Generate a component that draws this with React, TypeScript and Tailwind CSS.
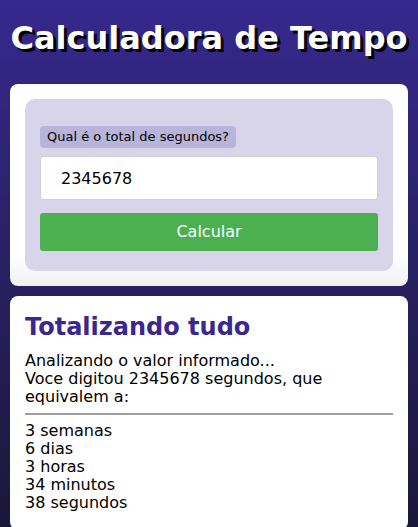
import React, { useState } from 'react';

const font = { fontFamily: '"DejaVu Sans", Verdana, sans-serif' };

const breakdown = (total: number) => {
  const semanas = Math.floor(total / 604800);
  let rest = total % 604800;
  const dias = Math.floor(rest / 86400);
  rest %= 86400;
  const horas = Math.floor(rest / 3600);
  rest %= 3600;
  const minutos = Math.floor(rest / 60);
  const segundos = rest % 60;
  return { semanas, dias, horas, minutos, segundos };
};

const App = () => {
  const [value, setValue] = useState('2345678');
  const [total, setTotal] = useState(2345678);
  const r = breakdown(total);

  return (
    <div
      className="min-h-[527px] w-full bg-gradient-to-b from-[#37288e] to-[#1b1738] px-[10px] pb-[2px]"
      style={font}
    >
      <h1 className="pt-[15px] pb-[23px] text-center text-[32px] font-bold leading-[46px] text-white [text-shadow:3px_3px_0_#000]">
        Calculadora de Tempo
      </h1>

      <div className="rounded-[8px] bg-gradient-to-b from-white from-85% to-[#f0f0f0] p-[15px]">
        <div className="rounded-[10px] bg-[#d8d4ea] px-[15px] pt-[25px] pb-[20px]">
          <span className="inline-block rounded-[4px] bg-[#b8b4da] px-[7px] py-[2px] text-[13px] leading-[18px] text-black">
            Qual é o total de segundos?
          </span>
          <input
            value={value}
            onChange={e => setValue(e.target.value)}
            className="mt-[8px] block h-[44px] w-full rounded-[3px] border border-[#cfcfcf] bg-white pl-[20px] text-[16px] text-black outline-none"
          />
          <button
            onClick={() => setTotal(parseInt(value || '0', 10) || 0)}
            className="mt-[13px] block h-[38px] w-full rounded-[3px] bg-[#4caf50] text-[16px] text-white"
          >
            Calcular
          </button>
        </div>
      </div>

      <div className="mt-[10px] rounded-[8px] bg-white px-[15px] pt-[16px] pb-[18px] text-[16px] leading-[18px] text-black">
        <h2 className="text-[24px] font-bold leading-[30px] text-[#38288f]">Totalizando tudo</h2>
        <p className="mt-[10px]">
          Analizando o valor informado...
          <br />
          Voce digitou {total} segundos, que equivalem a:
        </p>
        <hr className="my-[7px] border-t-2 border-[#a0a0a0]" />
        <p>
          {r.semanas} semanas
          <br />
          {r.dias} dias
          <br />
          {r.horas} horas
          <br />
          {r.minutos} minutos
          <br />
          {r.segundos} segundos
        </p>
      </div>
    </div>
  );
};

export default App;
